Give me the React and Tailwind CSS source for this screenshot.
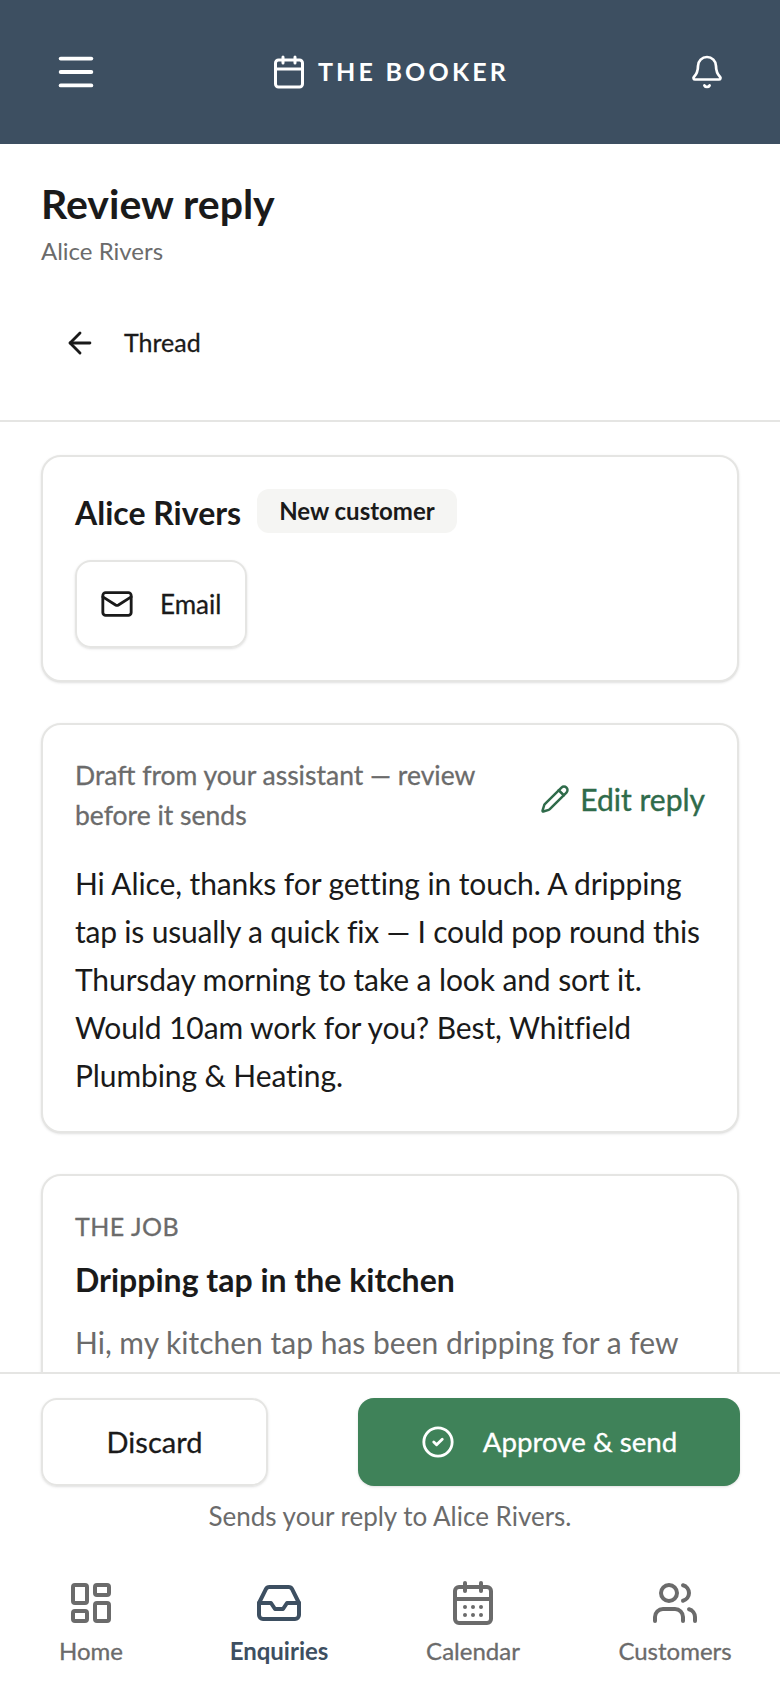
import React from "react";
import { Menu, Calendar, Bell, ArrowLeft, Mail, Pencil, CircleCheck, LayoutDashboard, Inbox, CalendarDays, Users } from "lucide-react";

function NavItem({ icon: Icon, label, active, cls }) {
  return (
    <div className={`flex w-[130px] flex-col items-center ${cls} ${active ? "text-[#3d4f61]" : "text-[#6b6b6b]"}`}>
      <Icon size={48} strokeWidth={2} />
      <span className={`mt-[8px] text-[24px] leading-[32px] ${active ? "font-bold" : "[-webkit-text-stroke:0.3px_currentColor]"}`}>{label}</span>
    </div>
  );
}

export default function App() {
  return (
    <div className="flex h-[1688px] w-[780px] flex-col overflow-hidden bg-white font-['Lato',sans-serif] text-[#1a1a1a]">
      <header className="flex h-[144px] shrink-0 items-center justify-between bg-[#3d4f61] pl-[53px] pr-[55px] text-white">
        <Menu size={46} strokeWidth={2} />
        <div className="mr-[8px] flex items-center gap-[11px]">
          <Calendar size={36} strokeWidth={2} />
          <span className="text-[25px] font-bold tracking-[3.2px]">THE BOOKER</span>
        </div>
        <Bell size={36} strokeWidth={1.8} />
      </header>

      <div className="shrink-0 border-b-2 border-[#e5e5e3] px-[41px] pt-[36px] pb-[37px]">
        <h1 className="text-[41px] font-bold leading-[48px]">Review reply</h1>
        <p className="mt-[7px] text-[24px] leading-[32px] text-[#6b6b6b]">Alice Rivers</p>
        <div className="mt-[36px] flex h-[80px] items-center gap-[27px] pl-[22px]">
          <ArrowLeft size={34} strokeWidth={2} />
          <span className="text-[25px] [-webkit-text-stroke:0.3px_currentColor]">Thread</span>
        </div>
      </div>

      <main className="flex min-h-0 flex-1 flex-col gap-[41px] overflow-hidden px-[41px] pt-[33px]">
        <section className="shrink-0 rounded-[20px] border-2 border-[#e5e5e3] bg-white p-[32px] shadow-sm">
          <div className="flex items-center gap-[16px]">
            <h2 className="text-[32px] font-bold leading-[44px]">Alice Rivers</h2>
            <span className="mb-[4px] rounded-[12px] bg-[#f5f5f3] px-[22px] py-[6px] text-[24px] font-bold leading-[32px]">New customer</span>
          </div>
          <div className="mt-[23px] flex h-[88px] w-[172px] items-center gap-[26px] rounded-[16px] border-2 border-[#e5e5e3] pl-[23px] shadow-sm">
            <Mail size={34} strokeWidth={2} />
            <span className="text-[26px] [-webkit-text-stroke:0.3px_currentColor]">Email</span>
          </div>
        </section>

        <section className="shrink-0 rounded-[20px] border-2 border-[#e5e5e3] bg-white px-[32px] pt-[30px] pb-[32px] shadow-sm">
          <div className="flex items-center justify-between">
            <p className="w-[420px] text-[26.5px] leading-[40px] text-[#6b6b6b] [-webkit-text-stroke:0.3px_currentColor]">Draft from your assistant — review before it sends</p>
            <div className="mt-[8px] flex items-center gap-[10px] text-[30px] text-[#2f6b4a] [-webkit-text-stroke:0.4px_currentColor]">
              <Pencil size={30} strokeWidth={2} />
              <span>Edit reply</span>
            </div>
          </div>
          <p className="mt-[24px] whitespace-nowrap text-[30px] leading-[48px] tracking-[-0.1px]">
            Hi Alice, thanks for getting in touch. A dripping<br />
            <span className="tracking-[-0.2px]">tap is usually a quick fix — I could pop round this</span><br />
            Thursday morning to take a look and sort it.<br />
            Would 10am work for you? Best, Whitfield<br />
            Plumbing &amp; Heating.
          </p>
        </section>

        <section className="shrink-0 rounded-[20px] border-2 border-[#e5e5e3] bg-white px-[32px] pt-[30px] pb-[32px] shadow-sm">
          <p className="text-[25px] leading-[40px] tracking-[0.5px] text-[#6b6b6b] [-webkit-text-stroke:0.3px_currentColor]">THE JOB</p>
          <h3 className="mt-[12px] text-[32px] font-bold leading-[44px]">Dripping tap in the kitchen</h3>
          <p className="mt-[16px] text-[30px] leading-[48px] text-[#6b6b6b]">Hi, my kitchen tap has been dripping for a few</p>
        </section>
      </main>

      <footer className="shrink-0 border-t-2 border-[#e5e5e3] bg-white">
        <div className="flex justify-between pl-[41px] pr-[40px] pt-[24px]">
          <div className="flex h-[88px] w-[227px] items-center justify-center rounded-[16px] border-2 border-[#e5e5e3] text-[29px] shadow-sm [-webkit-text-stroke:0.3px_currentColor]">Discard</div>
          <div className="flex h-[88px] w-[382px] items-center justify-center gap-[28px] rounded-[16px] bg-[#3f8259] text-[27.7px] text-white shadow-sm [-webkit-text-stroke:0.3px_currentColor]">
            <CircleCheck size={34} strokeWidth={2} />
            <span>Approve &amp; send</span>
          </div>
        </div>
        <p className="mt-[12px] text-center text-[26px] leading-[36px] text-[#6b6b6b]">Sends your reply to Alice Rivers.</p>
        <nav className="mt-[45px] flex h-[109px] pl-[26px]">
          <NavItem icon={LayoutDashboard} label="Home" cls="" />
          <NavItem icon={Inbox} label="Enquiries" active cls="ml-[58px]" />
          <NavItem icon={CalendarDays} label="Calendar" cls="ml-[64px]" />
          <NavItem icon={Users} label="Customers" cls="ml-[72px]" />
        </nav>
      </footer>
    </div>
  );
}
